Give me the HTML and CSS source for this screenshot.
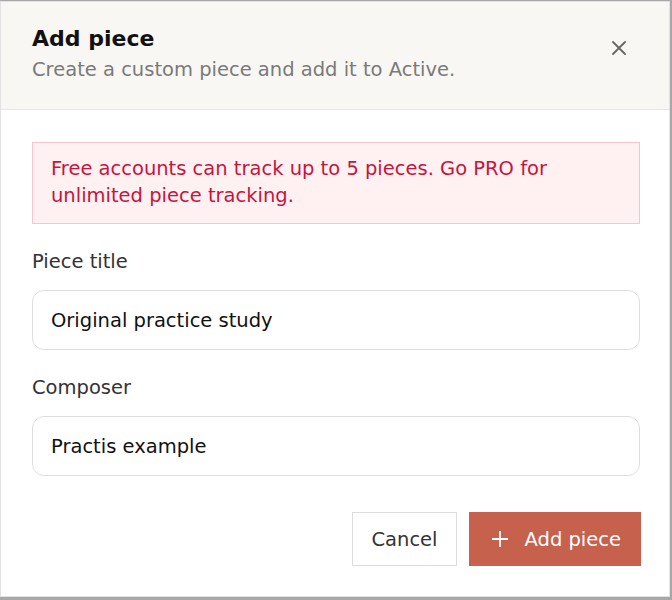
FILE: index.html
```html
<!DOCTYPE html>
<html lang="en">
<head>
<meta charset="utf-8">
<title>Add piece</title>
<link rel="stylesheet" href="styles.css">
</head>
<body>
<div class="modal">
  <header class="modal-header">
    <div class="titles">
      <h1 class="title">Add piece</h1>
      <p class="subtitle">Create a custom piece and add it to Active.</p>
    </div>
    <button class="close" aria-label="Close">
      <svg width="16" height="16" viewBox="0 0 16 16"><path d="M2 2L14 14M14 2L2 14" stroke="#666" stroke-width="1.8" stroke-linecap="round" fill="none"/></svg>
    </button>
  </header>
  <div class="modal-body">
    <div class="alert">Free accounts can track up to 5 pieces. Go PRO for unlimited piece tracking.</div>
    <label class="field">
      <span class="label">Piece title</span>
      <input class="input" type="text" value="Original practice study">
    </label>
    <label class="field">
      <span class="label">Composer</span>
      <input class="input" type="text" value="Practis example">
    </label>
    <div class="actions">
      <button class="btn btn-cancel">Cancel</button>
      <button class="btn btn-primary">
        <svg width="18" height="18" viewBox="0 0 18 18"><path d="M9 1V17M1 9H17" stroke="#fff" stroke-width="1.8" fill="none"/></svg>
        <span>Add piece</span>
      </button>
    </div>
  </div>
</div>
</body>
</html>
```

FILE: styles.css
```css
html, body {
  margin: 0;
  padding: 0;
}
body {
  background: #a8a8a8;
  font-family: "DejaVu Sans", "Noto Sans", sans-serif;
  height: 600px;
  overflow: hidden;
}
.modal {
  box-sizing: border-box;
  width: 670px;
  height: 596px;
  margin-top: 1px;
  background: #fff;
  border: 1px solid #e2e2e2;
  display: flex;
  flex-direction: column;
}
.modal-header {
  background: #f8f7f4;
  border-bottom: 1px solid #e6e6e6;
  height: 108px;
  box-sizing: border-box;
  padding: 22px 31px 0 31px;
  display: flex;
  justify-content: space-between;
  align-items: flex-start;
}
.title {
  margin: 0;
  font-size: 22px;
  font-weight: bold;
  color: #111;
  line-height: 30px;
}
.subtitle {
  margin: 2px 0 0;
  font-size: 19.5px;
  color: #7a7a7a;
  line-height: 28px;
}
.close {
  background: none;
  border: none;
  padding: 0;
  margin: 16px 11px 0 0;
  width: 16px;
  height: 16px;
  display: flex;
  cursor: pointer;
}
.modal-body {
  padding: 32px 29px 0 31px;
  display: flex;
  flex-direction: column;
}
.alert {
  background: #fff0f1;
  border: 1px solid #f6c6cc;
  color: #c4153e;
  font-size: 19.5px;
  line-height: 27px;
  padding: 12px 18px 14px;
}
.field {
  display: flex;
  flex-direction: column;
  margin-top: 24px;
}
.label {
  font-size: 19.5px;
  line-height: 27px;
  color: #333;
  margin-bottom: 15px;
}
.input {
  box-sizing: border-box;
  height: 60px;
  border: 1px solid #dedede;
  border-radius: 12px;
  padding: 0 18px;
  font-family: "DejaVu Sans", sans-serif;
  font-size: 19.5px;
  color: #111;
  background: #fff;
  outline: none;
}
.actions {
  display: flex;
  justify-content: flex-end;
  gap: 12px;
  margin-top: 36px;
  margin-right: -1px;
}
.btn {
  box-sizing: border-box;
  height: 54px;
  font-family: "DejaVu Sans", sans-serif;
  font-size: 19.5px;
  border-radius: 0;
  display: flex;
  align-items: center;
  cursor: pointer;
}
.btn-cancel {
  background: #fff;
  border: 1px solid #dddddd;
  color: #333;
  padding: 0 18px;
}
.btn-primary {
  background: #c5614d;
  border: 1px solid #c5614d;
  color: #fff;
  padding: 0 19px 0 21px;
  gap: 16px;
}
```
